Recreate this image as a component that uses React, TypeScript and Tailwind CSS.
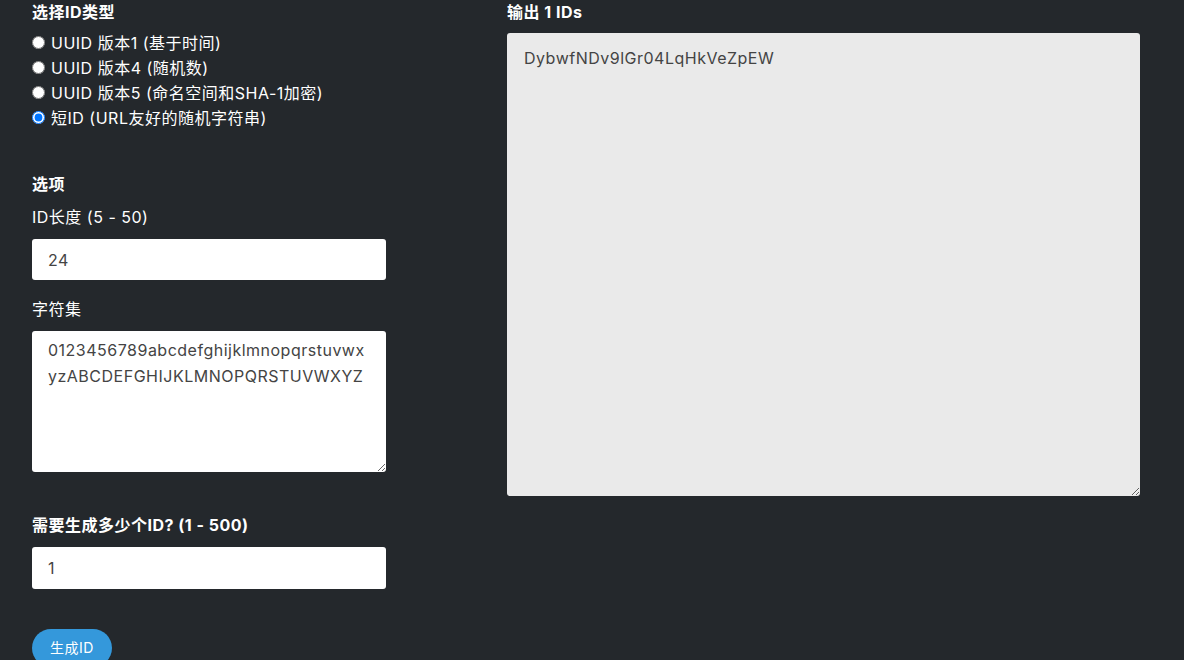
import React, { useState } from "react";

const CHARSET = "0123456789abcdefghijklmnopqrstuvwxyzABCDEFGHIJKLMNOPQRSTUVWXYZ";

const types = [
    { id: "v1", label: "UUID 版本1 (基于时间)" },
    { id: "v4", label: "UUID 版本4 (随机数)" },
    { id: "v5", label: "UUID 版本5 (命名空间和SHA-1加密)" },
    { id: "short", label: "短ID (URL友好的随机字符串)" },
];

export default function App() {
    const [type, setType] = useState("short");
    const [length, setLength] = useState("24");
    const [charset, setCharset] = useState(CHARSET);
    const [count, setCount] = useState("1");

    return (
        <div
            className="min-h-screen bg-[#24282c] text-white text-[16px] leading-[24px] tracking-[0.5px]"
            style={{ fontFamily: 'Inter, "Noto Sans CJK SC", sans-serif' }}
        >
            <div className="flex gap-[121px] pl-[32px]">
                <div className="w-[354px] flex flex-col">
                    <h3 className="font-bold">选择ID类型</h3>
                    <div className="mt-[6px] flex flex-col">
                        {types.map(t => (
                            <label key={t.id} className="flex items-center h-[25px] gap-[6px]">
                                <input
                                    type="radio"
                                    name="idtype"
                                    className="m-0 w-[13px] h-[13px]"
                                    checked={type === t.id}
                                    onChange={() => setType(t.id)}
                                />
                                <span>{t.label}</span>
                            </label>
                        ))}
                    </div>

                    <h3 className="font-bold mt-[42px]">选项</h3>
                    <label className="mt-[9px]">ID长度 (5 - 50)</label>
                    <input
                        type="text"
                        value={length}
                        onChange={e => setLength(e.target.value)}
                        className="mt-[10px] h-[41px] w-full rounded-[3px] bg-white px-[16px] text-[#444] outline-none"
                    />

                    <label className="mt-[17px]">字符集</label>
                    <textarea
                        value={charset}
                        onChange={e => setCharset(e.target.value)}
                        className="mt-[10px] h-[141px] w-full rounded-[3px] bg-white pl-[16px] pr-[14px] py-[6px] leading-[26px] text-[#444] outline-none break-all"
                    />

                    <h3 className="font-bold mt-[41px]">需要生成多少个ID? (1 - 500)</h3>
                    <input
                        type="text"
                        value={count}
                        onChange={e => setCount(e.target.value)}
                        className="mt-[10px] h-[42px] w-full rounded-[3px] bg-white px-[16px] text-[#444] outline-none"
                    />

                    <div className="mt-[40px]">
                        <button className="h-[38px] rounded-full bg-[#3498db] px-[18px] text-[14px] text-white">
                            生成ID
                        </button>
                    </div>
                </div>

                <div className="w-[633px] flex flex-col">
                    <h3 className="font-bold">输出 1 IDs</h3>
                    <textarea
                        readOnly
                        value="DybwfNDv9lGr04LqHkVeZpEW"
                        className="mt-[9px] h-[463px] w-full rounded-[3px] bg-[#eaeaea] px-[17px] py-[13px] text-[#444] outline-none"
                    />
                </div>
            </div>
        </div>
    );
}
